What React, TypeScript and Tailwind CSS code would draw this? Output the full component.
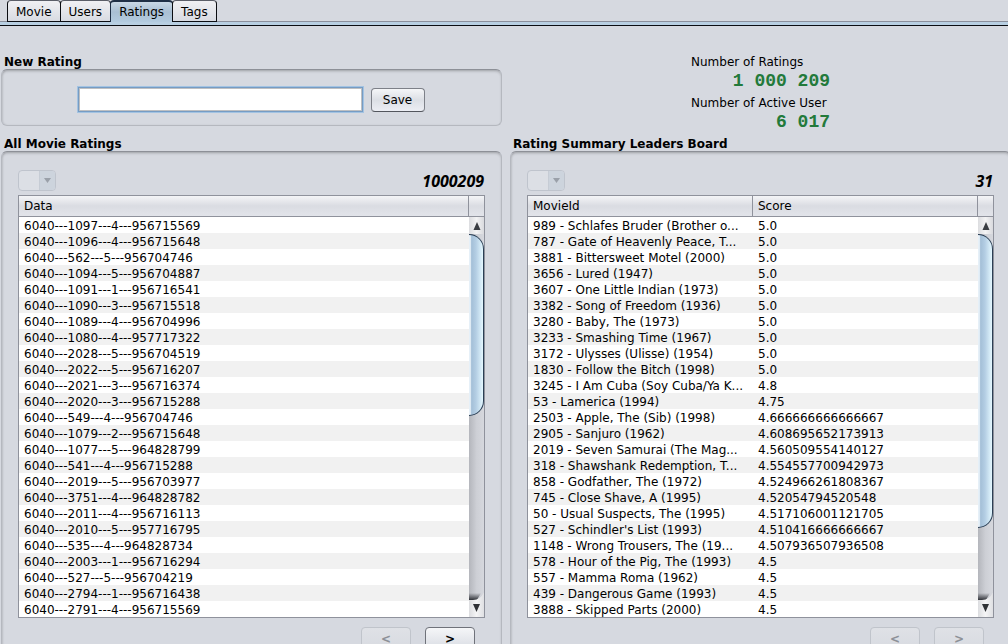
import { useId } from "react";
import type { ReactNode } from "react";

const ratings = [
  "6040---1097---4---956715569",
  "6040---1096---4---956715648",
  "6040---562---5---956704746",
  "6040---1094---5---956704887",
  "6040---1091---1---956716541",
  "6040---1090---3---956715518",
  "6040---1089---4---956704996",
  "6040---1080---4---957717322",
  "6040---2028---5---956704519",
  "6040---2022---5---956716207",
  "6040---2021---3---956716374",
  "6040---2020---3---956715288",
  "6040---549---4---956704746",
  "6040---1079---2---956715648",
  "6040---1077---5---964828799",
  "6040---541---4---956715288",
  "6040---2019---5---956703977",
  "6040---3751---4---964828782",
  "6040---2011---4---956716113",
  "6040---2010---5---957716795",
  "6040---535---4---964828734",
  "6040---2003---1---956716294",
  "6040---527---5---956704219",
  "6040---2794---1---956716438",
  "6040---2791---4---956715569",
].map((r) => [r]);

const leaders = [
  ["989 - Schlafes Bruder (Brother o...", "5.0"],
  ["787 - Gate of Heavenly Peace, T...", "5.0"],
  ["3881 - Bittersweet Motel (2000)", "5.0"],
  ["3656 - Lured (1947)", "5.0"],
  ["3607 - One Little Indian (1973)", "5.0"],
  ["3382 - Song of Freedom (1936)", "5.0"],
  ["3280 - Baby, The (1973)", "5.0"],
  ["3233 - Smashing Time (1967)", "5.0"],
  ["3172 - Ulysses (Ulisse) (1954)", "5.0"],
  ["1830 - Follow the Bitch (1998)", "5.0"],
  ["3245 - I Am Cuba (Soy Cuba/Ya K...", "4.8"],
  ["53 - Lamerica (1994)", "4.75"],
  ["2503 - Apple, The (Sib) (1998)", "4.666666666666667"],
  ["2905 - Sanjuro (1962)", "4.608695652173913"],
  ["2019 - Seven Samurai (The Mag...", "4.560509554140127"],
  ["318 - Shawshank Redemption, T...", "4.554557700942973"],
  ["858 - Godfather, The (1972)", "4.524966261808367"],
  ["745 - Close Shave, A (1995)", "4.52054794520548"],
  ["50 - Usual Suspects, The (1995)", "4.517106001121705"],
  ["527 - Schindler's List (1993)", "4.510416666666667"],
  ["1148 - Wrong Trousers, The (19...", "4.507936507936508"],
  ["578 - Hour of the Pig, The (1993)", "4.5"],
  ["557 - Mamma Roma (1962)", "4.5"],
  ["439 - Dangerous Game (1993)", "4.5"],
  ["3888 - Skipped Parts (2000)", "4.5"],
];

const tabs = ["Movie", "Users", "Ratings", "Tags"];

function Tabs({ current }: { current: string }) {
  return (
    <nav>
      <div role="tablist" className="flex h-[21px] pl-[7px]">
        {tabs.map((t) => (
          <button
            key={t}
            role="tab"
            aria-selected={t === current}
            className={
              t === current
                ? "-mr-px h-[22px] rounded-t border border-b-0 border-t-2 border-[#1f2f45] bg-linear-to-b from-[#c9d8e5] via-[#a9bfd3] to-[#b3cbdf] px-2 leading-[19px]"
                : "-mr-px h-[22px] rounded-t border border-[#0b0d12] border-t-[#5b5e68] bg-linear-to-b from-[#f0f0f3] to-[#d8dbe2] px-2 pt-px leading-5"
            }
          >
            {t}
          </button>
        ))}
      </div>
      <div className="h-[5px] border-b border-t border-b-[#0b0d12] border-t-[#8b8f9b] bg-[#b8cfe2]" />
    </nav>
  );
}

function Panel({ title, children, className }: { title: string; children: ReactNode; className: string }) {
  return (
    <section>
      <h2 className="h-4 pl-[3px] font-bold leading-[18px]">{title}</h2>
      <div
        className={`rounded-md border border-[#b5b8bf] border-t-[#8d9097] shadow-[inset_0_2px_3px_-1px_rgba(0,0,0,0.25),inset_1px_0_2px_rgba(0,0,0,0.08)] ${className}`}
      >
        {children}
      </div>
    </section>
  );
}

function ScrollBar({ thumb }: { thumb: string }) {
  const id = useId();
  return (
    <div className="flex flex-1 flex-col bg-linear-to-r from-[#b4b6bc] via-[#cdcfd5] to-[#d6d8de]">
      <button aria-label="Scroll up" className="flex h-[17px] items-center justify-center bg-linear-to-r from-[#dcdde0] via-[#f3f3f4] to-[#d9dade]">
        <svg width="8" height="8" viewBox="0 0 8 8">
          <path d="M4 0 L7.5 8 H0.5 Z" fill="#3a3d42" />
        </svg>
      </button>
      <div className={`rounded-r-2xl border border-l-0 border-[#2b3f55] bg-linear-to-r from-[#9db9d2] from-5% via-[#b4cee4] via-50% to-[#e4f8ff] shadow-[inset_3px_0_1px_-1px_#e6f0f8] ${thumb}`} />
      <div className="flex-1" />
      <button aria-label="Scroll down" className="flex flex-col">
        <svg width="15" height="24" viewBox="0 0 15 24">
          <defs>
            <linearGradient id={`${id}s`} x1="0" y1="0" x2="0" y2="1">
              <stop offset="0" stopColor="#303238" stopOpacity="0" />
              <stop offset="1" stopColor="#303238" />
            </linearGradient>
            <linearGradient id={`${id}b`}>
              <stop offset="0" stopColor="#dcdde0" />
              <stop offset="0.5" stopColor="#f5f5f6" />
              <stop offset="1" stopColor="#dfe0e3" />
            </linearGradient>
          </defs>
          <path d="M0 0 H12 L8 7 H0 Z" fill={`url(#${id}s)`} />
          <path d="M0 7 H4 Q12 7 15 -1 V24 H0 Z" fill={`url(#${id}b)`} />
          <path d="M4 11 H11 L7.5 19 Z" fill="#303236" />
        </svg>
      </button>
    </div>
  );
}

function DataTable({ columns, rows, thumb }: { columns: string[]; rows: string[][]; thumb: string }) {
  return (
    <div className="flex border border-[#8f929c]">
      <div className="min-w-0 flex-1 bg-white">
        <table className="w-full table-fixed border-separate border-spacing-0">
          <thead>
            <tr>
              {columns.map((c) => (
                <th
                  key={c}
                  className="h-[21px] border-b border-r border-[#8f929c] bg-linear-to-b from-[#f4f5f7] via-[#dadce2] to-[#e2e4ea] pl-[5px] text-left font-normal leading-5"
                >
                  {c}
                </th>
              ))}
            </tr>
          </thead>
          <tbody>
            {rows.map((r) => (
              <tr key={r[0]} className="even:bg-[#f1f1f1]">
                {r.map((cell, i) => (
                  <td key={i} className="h-4 overflow-hidden whitespace-nowrap pl-[5px] pt-0.5 leading-[14px]">
                    {cell}
                  </td>
                ))}
              </tr>
            ))}
          </tbody>
        </table>
      </div>
      <div className="flex w-[15px] flex-col">
        <div className="h-[21px] border-b border-[#8f929c] bg-linear-to-b from-[#f4f5f7] via-[#dadce2] to-[#e2e4ea]" />
        <ScrollBar thumb={thumb} />
      </div>
    </div>
  );
}

function Combo({ label }: { label: string }) {
  return (
    <div className="relative h-[21px] w-[38px] overflow-hidden rounded border border-[#bfc4cd] bg-[#dcdfe5]">
      <select disabled aria-label={label} className="h-full w-full appearance-none" />
      <span className="pointer-events-none absolute inset-y-0 right-0 flex w-4 items-center justify-center border-l border-[#c6ccd5] bg-[#cdd4dd]">
        <svg width="7" height="5" viewBox="0 0 7 5">
          <path d="M0 0 H7 L3.5 5 Z" fill="#9aa0a9" />
        </svg>
      </span>
    </div>
  );
}

function PageButton({ children, disabled, label }: { children: string; disabled?: boolean; label: string }) {
  return (
    <button
      disabled={disabled}
      aria-label={label}
      className="h-[23px] w-[50px] rounded border border-[#6f727a] bg-linear-to-b from-[#f5f6f8] to-[#d9dce3] font-bold leading-5 disabled:border-[#c0c4cb] disabled:from-[#dfe1e6] disabled:to-[#d8dbe1] disabled:text-[#8d9097]"
    >
      {children}
    </button>
  );
}

function ListPanel(props: {
  title: string;
  total: string;
  columns: string[];
  rows: string[][];
  thumb: string;
  last?: boolean;
}) {
  return (
    <Panel title={props.title} className="px-4 pb-4 pt-[18px]">
      <div className="mb-1 flex items-center justify-between">
        <Combo label={props.title} />
        <output className="pr-px font-['Open_Sans',sans-serif] text-base font-bold italic leading-5">{props.total}</output>
      </div>
      <DataTable columns={props.columns} rows={props.rows} thumb={props.thumb} />
      <div className="mt-[9px] flex justify-end gap-[14px] pr-[10px]">
        <PageButton disabled label="Previous page">{"<"}</PageButton>
        <PageButton disabled={props.last} label="Next page">{">"}</PageButton>
      </div>
    </Panel>
  );
}

function Stat({ label, value }: { label: string; value: string }) {
  return (
    <div className="mb-0.5">
      <dt className="whitespace-nowrap leading-[18px]">{label}</dt>
      <dd className="text-right font-['Liberation_Mono',monospace] text-lg font-bold leading-[21px] text-[#237a3b]">{value}</dd>
    </div>
  );
}

export default function App() {
  return (
    <div className="h-screen overflow-hidden bg-[#d6d9e0] font-['DejaVu_Sans',sans-serif] text-xs text-black">
      <Tabs current="Ratings" />
      <main className="-mr-[3px] grid grid-cols-2 gap-x-2 pl-px pt-[27px]">
        <Panel title="New Rating" className="flex h-[57px] items-center justify-center gap-[7px] pr-0.5 pt-1">
          <input
            aria-label="New rating"
            className="h-[27px] w-[287px] border border-[#a3c3e2] bg-white px-1.5 shadow-[inset_0_0_0_1px_#769cc4,inset_0_0_0_2px_#bdbfc2] outline-none"
          />
          <button className="h-6 w-[54px] rounded border border-[#7d8088] border-b-[#53565d] bg-linear-to-b from-[#f5f6f8] via-[#dcdfe5] to-[#eceef4] leading-5">
            Save
          </button>
        </Panel>
        <dl className="w-[139px] justify-self-center">
          <Stat label="Number of Ratings" value="1 000 209" />
          <Stat label="Number of Active User" value="6 017" />
        </dl>
        <div className="col-span-2 grid grid-cols-2 gap-x-2">
          <ListPanel title="All Movie Ratings" total="1000209" columns={["Data"]} rows={ratings} thumb="h-[182px]" />
          <ListPanel
            title="Rating Summary Leaders Board"
            total="31"
            columns={["MovieId", "Score"]}
            rows={leaders}
            thumb="h-[294px]"
            last
          />
        </div>
      </main>
    </div>
  );
}
